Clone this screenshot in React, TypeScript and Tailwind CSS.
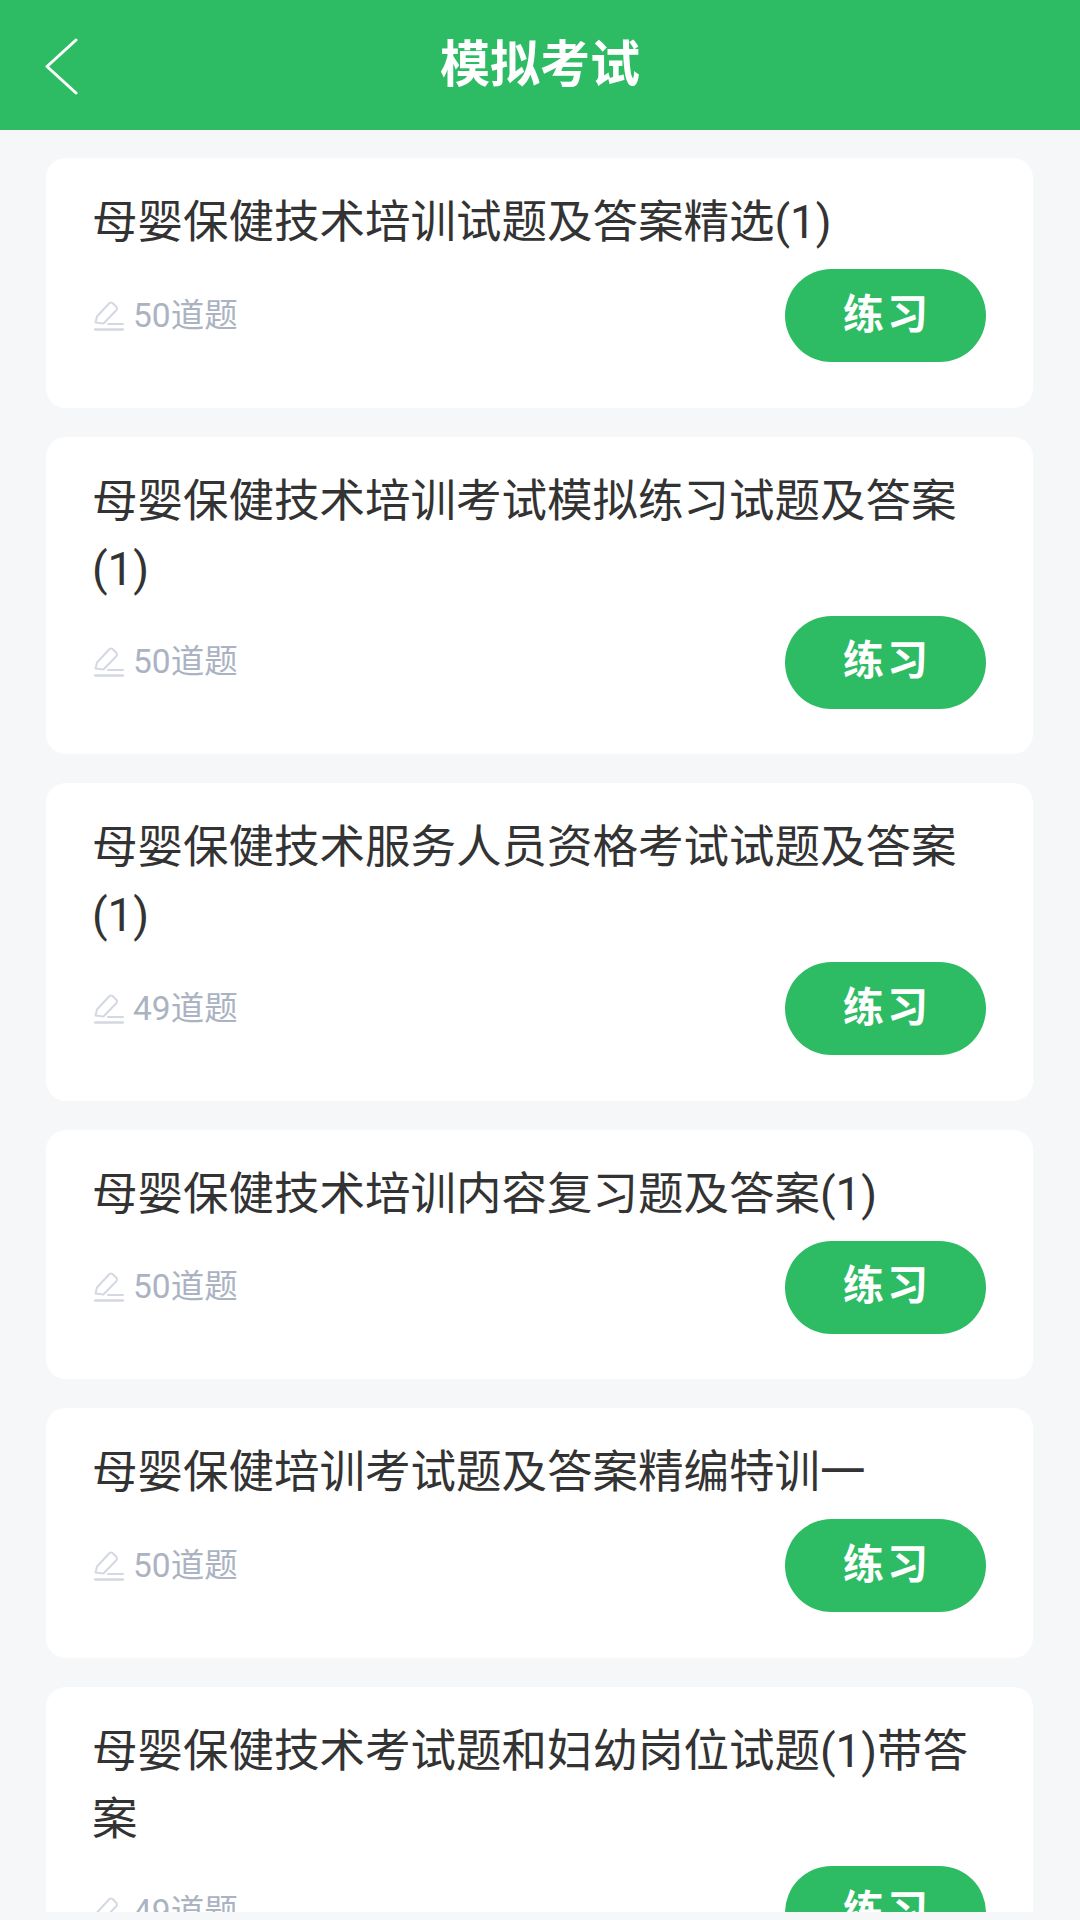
const exams = [
  { title: "母婴保健技术培训试题及答案精选(1)", count: 50 },
  { title: "母婴保健技术培训考试模拟练习试题及答案(1)", count: 50 },
  { title: "母婴保健技术服务人员资格考试试题及答案(1)", count: 49 },
  { title: "母婴保健技术培训内容复习题及答案(1)", count: 50 },
  { title: "母婴保健培训考试题及答案精编特训一", count: 50 },
  { title: "母婴保健技术考试题和妇幼岗位试题(1)带答案", count: 49 },
];

function PenIcon() {
  return (
    <svg width="30" height="30" viewBox="0 0 30 30" fill="none" stroke="#d3d8e2" strokeWidth="2" strokeLinejoin="round" strokeLinecap="round">
      <path d="M1.5 21.5 L3 15.5 L15.5 2 Q17 1 18.5 2 L22.5 6 Q23.5 7.5 22.5 9 L9.5 22.5 Z" />
      <path d="M14 23 H29" />
      <path d="M1 28.5 H29" strokeWidth="2.5" />
    </svg>
  );
}

export default function App() {
  return (
    <div
      className="w-[1080px] h-[1920px] overflow-hidden bg-[#f5f7f9] flex flex-col"
      style={{ fontFamily: 'Roboto, "Noto Sans CJK SC", sans-serif' }}
    >
      <header className="relative h-[130px] shrink-0 bg-[#2dbc63] flex items-center justify-center">
        <svg className="absolute left-[45px] top-[38px]" width="33" height="57" viewBox="0 0 33 57" fill="none" stroke="#ffffff" strokeWidth="3" strokeLinecap="round" strokeLinejoin="round">
          <path d="M31 2 L2 28.5 L31 55" />
        </svg>
        <h1 className="text-[50px] leading-none font-bold text-white">模拟考试</h1>
      </header>
      <main className="h-[1782px] shrink-0 overflow-hidden pl-[46px] pr-[47px] pt-[28px] flex flex-col gap-[29px]">
        {exams.map((e, i) => (
          <section key={i} className="shrink-0 bg-white rounded-[20px] pl-[46px] pr-[47px] pt-[31px] pb-[45.5px]">
            <h2 className="text-[45.5px] leading-[68px] font-normal text-[#333333]">{e.title}</h2>
            <div className="mt-[12px] flex items-center justify-between">
              <div className="flex items-center gap-[9px] text-[33.5px] leading-none text-[#abb3c3]">
                <span className="ml-[2px] flex">
                  <PenIcon />
                </span>
                <span>{e.count}道题</span>
              </div>
              <button className="w-[201px] h-[93px] pl-[3px] rounded-full bg-[#2dbc63] text-white text-[41px] font-bold tracking-[3px]">
                练习
              </button>
            </div>
          </section>
        ))}
      </main>
    </div>
  );
}
